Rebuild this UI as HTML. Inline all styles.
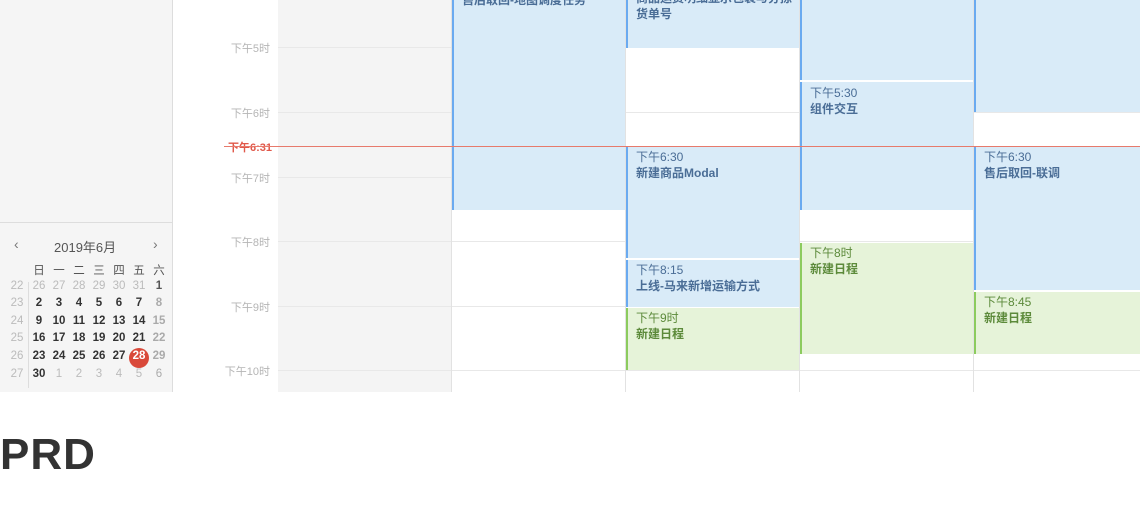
<!DOCTYPE html>
<html><head><meta charset="utf-8"><style>
*{margin:0;padding:0;box-sizing:border-box}
body{width:1140px;height:510px;background:#fff;position:relative;overflow:hidden;font-family:"Liberation Sans","Noto Sans CJK SC",sans-serif}
.a{position:absolute}
.hl{position:absolute;left:278px;right:0;height:1px;background:#e8e8e8}
.tl{position:absolute;left:200px;width:70px;text-align:right;font-size:11px;color:#b5b5b5}
.vl{position:absolute;top:0;height:392px;width:1px;background:#e2e2e2}
.ev{position:absolute;font-size:12px;line-height:16px;padding:2px 0 0 8px;overflow:hidden}
.b{background:#d9ebf8;border-left:2px solid #6aaaf0;color:#4a6d96}
.g{background:#e6f3d9;border-left:2px solid #8ccb5e;color:#5c8a3a}
.ev b{font-weight:bold}
.cal{position:absolute;font-size:11.5px;text-align:center;width:20px}
</style></head><body>
<div class="a" style="left:0;top:0;width:173px;height:392px;background:#f5f5f5;border-right:1px solid #ddd"></div>
<div class="a" style="left:0;top:222px;width:173px;height:1px;background:#ddd"></div>
<div class="a" style="left:278px;top:0;width:174px;height:392px;background:#f4f4f4"></div>
<div class="hl" style="top:47px"></div><div class="hl" style="top:112px"></div><div class="hl" style="top:177px"></div><div class="hl" style="top:241px"></div><div class="hl" style="top:306px"></div><div class="hl" style="top:370px"></div>
<div class="vl" style="left:451px"></div><div class="vl" style="left:625px"></div><div class="vl" style="left:799px"></div><div class="vl" style="left:973px"></div>
<div class="tl" style="top:40px">下午5时</div>
<div class="tl" style="top:105px">下午6时</div>
<div class="tl" style="top:139px;color:#e0584a;font-weight:bold;left:200px;width:72px">下午6:31</div>
<div class="tl" style="top:170px">下午7时</div>
<div class="tl" style="top:234px">下午8时</div>
<div class="tl" style="top:299px">下午9时</div>
<div class="tl" style="top:363px">下午10时</div>

<div class="ev b" style="left:452px;top:0;width:173px;height:210px;padding-top:0"><b style="position:relative;top:-8px">售后取回-地图调度任务</b></div>
<div class="ev b" style="left:626px;top:0;width:173px;height:48px;padding-top:0"><div style="margin-top:-10px"><b>商品运费明细显示包裹与分拣</b><br><b>货单号</b></div></div>
<div class="ev b" style="left:800px;top:0;width:173px;height:80px"></div>
<div class="ev b" style="left:974px;top:0;width:166px;height:112px"></div>
<div class="ev b" style="left:800px;top:82px;width:173px;height:128px;padding-top:3px">下午5:30<br><b>组件交互</b></div>
<div class="a" style="left:224px;top:146px;width:916px;height:1px;background:#e77a6c"></div>
<div class="ev b" style="left:626px;top:147px;width:173px;height:111px">下午6:30<br><b>新建商品Modal</b></div>
<div class="ev b" style="left:974px;top:147px;width:166px;height:143px">下午6:30<br><b>售后取回-联调</b></div>
<div class="ev b" style="left:626px;top:260px;width:173px;height:47px">下午8:15<br><b>上线-马来新增运输方式</b></div>
<div class="ev g" style="left:626px;top:308px;width:173px;height:62px">下午9时<br><b>新建日程</b></div>
<div class="ev g" style="left:800px;top:243px;width:173px;height:111px">下午8时<br><b>新建日程</b></div>
<div class="ev g" style="left:974px;top:292px;width:166px;height:62px">下午8:45<br><b>新建日程</b></div>

<div class="a" style="left:14px;top:236px;font-size:14px;color:#777">‹</div>
<div class="a" style="left:54px;top:237px;font-size:13px;color:#555">2019年6月</div>
<div class="a" style="left:153px;top:236px;font-size:14px;color:#777">›</div>
<div class="a" style="left:28px;top:282px;width:1px;height:106px;background:#ddd"></div>
<div class="a" style="left:129px;top:348px;width:20px;height:20px;border-radius:50%;background:#d9493a"></div>
<div id="c"></div>
<script>
var rows=[["","日","一","二","三","四","五","六"],["22","26","27","28","29","30","31","1"],["23","2","3","4","5","6","7","8"],["24","9","10","11","12","13","14","15"],["25","16","17","18","19","20","21","22"],["26","23","24","25","26","27","28","29"],["27","30","1","2","3","4","5","6"]];
var h="";
for(var r=0;r<7;r++)for(var c=0;c<8;c++){var t=rows[r][c];var col="#333",fw="bold";
if(c==0||r==0){col=c==0?"#bbb":"#555";fw="normal";}
if(r==1&&c<7)col="#bbb",fw="normal";
if(r==6&&c>1)col="#bbb",fw="normal";
if(c==7&&r>1)col="#aaa";
if(r==5&&c==6)col="#fff";
if(r==1&&c==7)col="#555";
var x=c==0?7:29+(c-1)*20;
h+='<div class="cal" style="left:'+x+'px;top:'+(262+r*17.6)+'px;color:'+col+';font-weight:'+fw+'">'+t+'</div>';}
document.getElementById("c").innerHTML=h;
</script>
<div class="a" style="left:0;top:430px;font-size:44px;font-weight:bold;color:#333;letter-spacing:1px">PRD</div>
</body></html>
